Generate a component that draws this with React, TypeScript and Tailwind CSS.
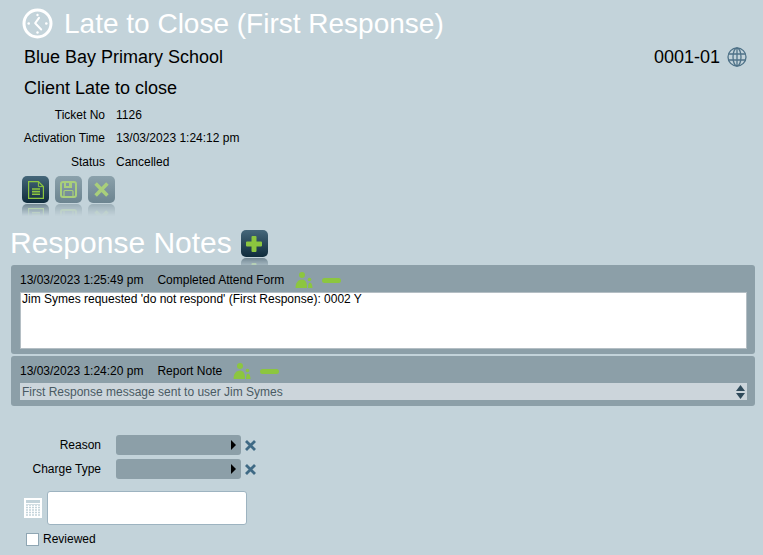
function ClockIcon() {
  return (
    <svg width="31" height="31" viewBox="0 0 31 31" fill="none">
      <circle cx="15.5" cy="15.5" r="13.5" stroke="#fff" strokeWidth="3" />
      <path d="M17 9.800 L13.200 15.200 L19.200 21.500" stroke="#fff" strokeWidth="2" strokeLinecap="round" strokeLinejoin="round" />
      <circle cx="6.700" cy="15.500" r="1.300" fill="#fff" />
      <circle cx="24.300" cy="15.500" r="1.300" fill="#fff" />
      <circle cx="15.500" cy="7" r="1.200" fill="#fff" />
      <circle cx="15.500" cy="24.500" r="1.200" fill="#fff" />
    </svg>
  );
}

function GlobeIcon() {
  return (
    <svg width="20" height="20" viewBox="0 0 20 20" fill="none" stroke="#4f7288" strokeWidth="1.300">
      <circle cx="10" cy="10" r="9" />
      <ellipse cx="10" cy="10" rx="4" ry="9" />
      <path d="M10 1v18M1.500 7h17M1.500 13h17" />
    </svg>
  );
}

function DocGlyph() {
  return (
    <svg width="16" height="18" viewBox="0 0 16 18" fill="none" stroke="#8cc63f" strokeWidth="1.200">
      <path d="M.6.6h9.800l5 5v11.800H.6z" />
      <path d="M10.400.6v5h5" strokeWidth="1" />
      <path d="M4 8h8M4 10.600h8M4 13.200h8" strokeWidth="1.600" />
    </svg>
  );
}

function SaveGlyph() {
  return (
    <svg width="17" height="17" viewBox="0 0 17 17" fill="none" stroke="#a9cf7b" strokeWidth="2">
      <path d="M1 3a2 2 0 0 1 2-2h11a2 2 0 0 1 2 2v11a2 2 0 0 1-2 2H3a2 2 0 0 1-2-2z" />
      <path d="M5 1v5h6V1" />
      <path d="M9.500 2v3" strokeWidth="1" />
      <path d="M4 15.500v-5a1 1 0 0 1 1-1h7a1 1 0 0 1 1 1v5" strokeWidth="1.200" />
    </svg>
  );
}

function CrossGlyph() {
  return (
    <svg width="15" height="15" viewBox="0 0 15 15" fill="none" stroke="#a9cf7b" strokeWidth="3.600">
      <path d="M1.600 1.600l11.800 11.800M13.400 1.600L1.600 13.400" />
    </svg>
  );
}

function PlusGlyph() {
  return (
    <svg width="16" height="16" viewBox="0 0 16 16" fill="#8cc63f">
      <path d="M5.500 1a1 1 0 0 1 1-1h3a1 1 0 0 1 1 1v4.500H15a1 1 0 0 1 1 1v3a1 1 0 0 1-1 1h-4.500V15a1 1 0 0 1-1 1h-3a1 1 0 0 1-1-1v-4.500H1a1 1 0 0 1-1-1v-3a1 1 0 0 1 1-1h4.500z" />
    </svg>
  );
}

function UsersIcon() {
  return (
    <svg width="18" height="16" viewBox="0 0 18 16" fill="#8cc63f">
      <circle cx="7" cy="3" r="3" />
      <path d="M.5 16c0-5 2.500-8.500 6.500-8.500s5 3.500 5 8.500z" />
      <circle cx="14.500" cy="7.500" r="1.800" />
      <path d="M13 16c0-3 .5-5.500 2-5.500s2.500 2.500 2.500 5.500z" />
    </svg>
  );
}

function MinusBar() {
  return <div className="w-[19px] h-[5px] rounded-full bg-[#8cc63f]" />;
}

function SquareButton({ children, dim }: { children: React.ReactNode; dim?: boolean }) {
  const face = dim
    ? "bg-gradient-to-b from-[#8ba1ab] to-[#6c8490]"
    : "bg-gradient-to-b from-[#45677a] to-[#0f2c3c]";
  return (
    <div className="w-[27px] flex flex-col">
      <div className={`h-[27px] rounded-[5px] flex items-center justify-center ${face}`}>{children}</div>
      <div className="h-[12px] mt-px overflow-hidden [mask-image:linear-gradient(to_bottom,rgba(0,0,0,0.45),transparent)]">
        <div className={`h-[27px] rounded-[5px] flex items-center justify-center -scale-y-100 ${face}`}>
          {children}
        </div>
      </div>
    </div>
  );
}

function DetailRow({ label, value }: { label: string; value: string }) {
  return (
    <div className="flex h-[23.5px] items-center text-[12px] text-black">
      <div className="w-[105px] text-right">{label}</div>
      <div className="ml-[11px]">{value}</div>
    </div>
  );
}

function NoteHeader({ date, kind }: { date: string; kind: string }) {
  return (
    <div className="flex items-center h-[27px] pt-[3px] text-[12px] text-black">
      <span>{date}</span>
      <span className="ml-[14px]">{kind}</span>
      <span className="ml-[11px]"><UsersIcon /></span>
      <span className="ml-[9px]"><MinusBar /></span>
    </div>
  );
}

function PickRow({ label }: { label: string }) {
  return (
    <div className="flex items-center h-[20px] text-[12px] text-black">
      <div className="w-[101px] text-right">{label}</div>
      <div className="ml-[15px] w-[125px] h-[20px] rounded-[3px] bg-[#8c9fa8] flex items-center justify-end pr-[5px]">
        <div className="w-0 h-0 border-y-[5.500px] border-y-transparent border-l-[5px] border-l-black" />
      </div>
      <svg className="ml-[4px]" width="11" height="11" viewBox="0 0 11 11" fill="none" stroke="#3f6a85" strokeWidth="2.800">
        <path d="M1 1l9 9M10 1l-9 9" />
      </svg>
    </div>
  );
}

export default function App() {
  return (
    <div className="w-[763px] h-[555px] overflow-hidden bg-[#c3d3da] font-['Liberation_Sans',Arial,sans-serif]">
      <div className="flex items-center h-[44px] pt-[3px] pl-[22px]">
        <ClockIcon />
        <h1 className="ml-[11px] text-[28px] leading-none text-white">Late to Close (First Response)</h1>
      </div>

      <div className="flex items-center justify-between h-[26px] pl-[24px] pr-[16px] text-[18px] text-black">
        <span>Blue Bay Primary School</span>
        <div className="flex items-center gap-[7px]">
          <span>0001-01</span>
          <GlobeIcon />
        </div>
      </div>
      <div className="pl-[24px] mt-[5px] h-[26px] text-[18px] leading-[26px] text-black">Client Late to close</div>

      <div className="mt-[2px]">
        <DetailRow label="Ticket No" value="1126" />
        <DetailRow label="Activation Time" value="13/03/2023 1:24:12 pm" />
        <DetailRow label="Status" value="Cancelled" />
      </div>

      <div className="flex gap-[6px] pl-[22px] mt-[2.5px]">
        <SquareButton><DocGlyph /></SquareButton>
        <SquareButton dim><SaveGlyph /></SquareButton>
        <SquareButton dim><CrossGlyph /></SquareButton>
      </div>

      <div className="flex items-start pl-[10px] h-[39px] mt-[10px]">
        <h2 className="text-[30px] leading-[34px] text-white">Response Notes</h2>
        <div className="ml-[9px] mt-[4px]">
          <SquareButton><PlusGlyph /></SquareButton>
        </div>
      </div>

      <div className="relative z-10 ml-[11px] w-[744px] flex flex-col gap-[2px]">
        <div className="rounded-[3px] bg-[#8c9fa8] px-[9px] h-[89px]">
          <NoteHeader date="13/03/2023 1:25:49 pm" kind="Completed Attend Form" />
          <div className="h-[57px] w-[727px] bg-white border border-[#b4bec4] px-[1px] text-[12px] leading-[12px] text-black">
            Jim Symes requested 'do not respond' (First Response): 0002 Y
          </div>
        </div>
        <div className="rounded-[3px] bg-[#8c9fa8] px-[9px] h-[50px]">
          <NoteHeader date="13/03/2023 1:24:20 pm" kind="Report Note" />
          <div className="flex items-center justify-between h-[17px] w-[727px] bg-[#ccd5db] pl-[2px] pr-[2px] text-[12px] text-[#4a5a63]">
            <span>First Response message sent to user Jim Symes</span>
            <svg width="9" height="16" viewBox="0 0 9 16" fill="#2f4a5a">
              <path d="M4.500 1L9 7H0z" />
              <path d="M0 9h9l-4.500 6z" />
            </svg>
          </div>
        </div>
      </div>

      <div className="mt-[29px] flex flex-col gap-[4px]">
        <PickRow label="Reason" />
        <PickRow label="Charge Type" />
      </div>

      <div className="flex items-center mt-[12px] pl-[24px]">
        <svg width="18" height="20" viewBox="0 0 18 20">
          <rect width="18" height="20" fill="#fff" />
          <rect x="2" y="2" width="14" height="3" fill="#c3d3da" />
          <path d="M2 7h14M2 9.500h14M2 12h14M2 14.500h14M2 17h14" stroke="#c3d3da" strokeWidth="1.500" />
          <path d="M4.500 7v11M7.500 7v11M10.500 7v11M13.500 7v11" stroke="#fff" strokeWidth="1" />
        </svg>
        <div className="ml-[5px] w-[200px] h-[34px] rounded-[3px] bg-white border border-[#9db3c0]" />
      </div>

      <div className="flex items-center mt-[5px] pl-[26px] text-[12px] text-black">
        <div className="w-[13px] h-[13px] bg-white border border-[#8fa6b3]" />
        <span className="ml-[4px]">Reviewed</span>
      </div>
    </div>
  );
}
